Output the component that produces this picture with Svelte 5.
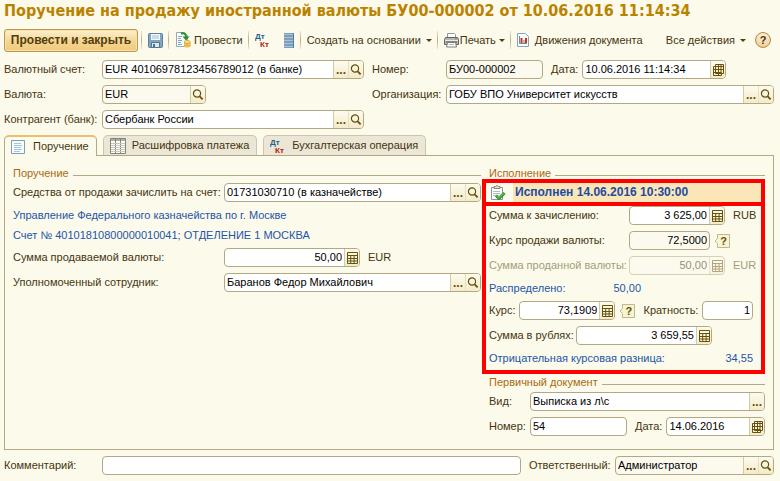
<script>
	const title = 'Поручение на продажу иностранной валюты БУ00-000002 от 10.06.2016 11:14:34';

	let activeTab = $state('order');

	const tabs = [
		{ id: 'order', label: 'Поручение', icon: 'sheet' },
		{ id: 'payment', label: 'Расшифровка платежа', icon: 'table' },
		{ id: 'entry', label: 'Бухгалтерская операция', icon: 'dtkt' }
	];

	const buttonLabels = {
		dots: 'Выбрать',
		search: 'Открыть',
		calc: 'Калькулятор',
		date: 'Календарь'
	};
</script>

{#snippet icon(name)}
	{#if name === 'search'}
		<svg width="12" height="12" viewBox="0 0 12 12" fill="none" stroke="#65500c">
			<circle cx="5" cy="4.5" r="3.6" stroke-width="1.2" />
			<path d="M7.4 7.2L10.6 10.4" stroke-width="1.8" />
		</svg>
	{:else if name === 'calc'}
		<svg width="11" height="12" viewBox="0 0 11 12">
			<path d="M.5.5h10v11H.5z" fill="#fbf5dc" stroke="#65500c" />
			<path d="M1 3h9v1H1zM1 6h9v1H1zM1 8.500h9v1H1zM3.200 3h1v8.500h-1zM6.600 3h1v8.500h-1z" fill="#65500c" />
		</svg>
	{:else if name === 'date'}
		<svg width="11" height="12" viewBox="0 0 11 12" fill="none" stroke="#65500c">
			<path d="M2.5.5h8v9h-8zM.5 2.500v9h8v-2M.5 2.500h10M.5 5.500h10M.5 8.500h8M5.500.5v11M8 .5v9" />
		</svg>
	{:else if name === 'save'}
		<svg width="15" height="15" viewBox="0 0 15 15">
			<path d="M.5 1.500q0-1 1-1h12q1 0 1 1v12q0 1-1 1h-12q-1 0-1-1z" fill="#7fa6c4" stroke="#5a7f9f" />
			<path d="M3 1h9v6H3z" fill="#f4f8fa" />
			<path d="M4 3h7M4 5h7" stroke="#a9bccb" />
			<path d="M3.500 9.500h8v5h-8z" fill="#dfe8ee" stroke="#56768f" />
			<path d="M5 11h2v3H5z" fill="#4c6f8b" />
		</svg>
	{:else if name === 'post'}
		<svg width="16" height="16" viewBox="0 0 16 16">
			<path d="M1.500.5h8l3 3v11h-11z" fill="#fafcfd" stroke="#93a9b5" />
			<path d="M3 4.500h4M3 6.500h3M3 8.500h4M3 10.500h3M3 12.500h4" stroke="#85a8bf" />
			<path d="M6 1.500c3-1 5 0 5 3.500" fill="none" stroke="#25902d" stroke-width="2" />
			<path d="M7.500 4.500h7L11 8.500z" fill="#25902d" />
			<path d="M9 10v4.500q3 2 6.500 0V10z" fill="#e2a52b" />
			<ellipse cx="12.200" cy="10" rx="3.200" ry="1.500" fill="#ffe08a" stroke="#cc8d1c" stroke-width=".6" />
			<path d="M9 12q3 1.800 6.500 0M9 13.800q3 1.800 6.500 0" fill="none" stroke="#fbd773" stroke-width=".8" />
		</svg>
	{:else if name === 'dtkt'}
		<svg class="dtkt" width="16" height="16" viewBox="0 0 16 16">
			<text x="0" y="7" fill="#245f8c">Дт</text>
			<text x="5" y="15" fill="#b5160c">Кт</text>
		</svg>
	{:else if name === 'register'}
		<svg width="12" height="15" viewBox="0 0 12 15">
			<path d="M1 0h10v15H1z" fill="#55799a" />
			<path d="M1 1.500h9M1 4.500h9M1 7.500h9M1 10.500h9M1 13.500h9" stroke="#a6c5dc" stroke-width="2" />
		</svg>
	{:else if name === 'print'}
		<svg width="15" height="15" viewBox="0 0 15 15">
			<path d="M3.500 5V.5h7l1 1V5" fill="#fff" stroke="#8b9aa3" />
			<path d="M1.500 4.500h12l1 2v5H.5v-5z" fill="#b7b7b2" stroke="#62625f" />
			<path d="M1 7.500h13" stroke="#ececea" />
			<path d="M2 9h11" stroke="#54544f" />
			<path d="M3.500 9.500h8l1 4.500h-10z" fill="#fff" stroke="#7f7f7a" />
			<path d="M5 11.500h5" stroke="#a4b9c6" />
			<path d="M11 6h2" stroke="#50a144" />
		</svg>
	{:else if name === 'chart'}
		<svg width="12" height="14" viewBox="0 0 12 14">
			<path d="M.5.5h8l3 3v10H.5z" fill="#fbfdfe" stroke="#87a3b8" />
			<path d="M2.500 3v7.500H10" fill="none" stroke="#6c8ca4" />
			<path d="M4.500 5v5" stroke="#cf3126" stroke-width="2" />
			<path d="M7 7v3" stroke="#3d9f3c" />
			<path d="M9 5v5" stroke="#cf3126" stroke-width="2" />
		</svg>
	{:else if name === 'sheet'}
		<svg width="14" height="14" viewBox="0 0 14 14">
			<path d="M.5.5h13v13H.5z" fill="#f8fcfd" stroke="#7f9fb1" />
			<path d="M3 3.500h7M3 5.500h8M3 7.500h7M3 9.500h8M3 11.500h6" stroke="#a2c6dc" />
		</svg>
	{:else if name === 'table'}
		<svg width="16" height="16" viewBox="0 0 16 16">
			<path d="M.5.5h15v15H.5z" fill="#fdfdfb" stroke="#85857c" />
			<path d="M1 1h14v2H1z" fill="#aeaea6" />
			<path d="M5.500 1v14M10.500 1v14" stroke="#85857c" />
			<path d="M1 5.500h14M1 7.500h14M1 9.500h14M1 11.500h14M1 13.500h14" stroke="#c8c8c0" />
		</svg>
	{:else if name === 'done'}
		<svg width="16" height="16" viewBox="0 0 16 16">
			<path d="M1.500 2.500h11v12h-11z" fill="#fdfefe" stroke="#8798a2" />
			<path d="M4 3.500V1.500h1.500q1.500-2 3 0H10v2z" fill="#e5e3d6" stroke="#8c8265" />
			<path d="M3 6.500h7M3 8.500h7M3 10.500h4" stroke="#a9bfcc" />
			<path d="M6 10.500l3 2.800L14.500 8" fill="none" stroke="#2b8a22" stroke-width="3" />
			<path d="M6.500 10.500l2.500 2.200L14 8" fill="none" stroke="#5cb948" stroke-width="1.600" />
		</svg>
	{/if}
{/snippet}

{#snippet field(id, value, buttons = [], kind = '')}
	<span class={'field ' + kind}>
		<input {id} {value} disabled={kind.includes('off')} readonly={kind.includes('locked')} />
		{#each buttons as name}
			<button
				class={'pick ' + name}
				type="button"
				aria-label={buttonLabels[name]}
				disabled={kind.includes('off')}
			>
				{#if name === 'dots'}...{:else}{@render icon(name)}{/if}
			</button>
		{/each}
	</span>
{/snippet}

{#snippet hint()}
	<button class="hint" type="button" aria-label="Подсказка">
		<svg width="16" height="14" viewBox="0 0 16 14" fill="#f8f3d3" stroke="#c1b88a">
			<path d="M3.500.5h12v13h-12V9.500L1 7l2.500-2.500z" />
		</svg>
		<b>?</b>
	</button>
{/snippet}

<main>
	<h1>{title}</h1>

	<div class="toolbar">
		<button class="primary" type="button">Провести и закрыть</button>
		<i class="sep"></i>
		<button class="tool" type="button" aria-label="Записать">{@render icon('save')}</button>
		<i class="sep"></i>
		<button class="tool" type="button">{@render icon('post')}Провести</button>
		<i class="sep"></i>
		<button class="tool" type="button" aria-label="Проводки">{@render icon('dtkt')}</button>
		<button class="tool gap" type="button" aria-label="Регистры">{@render icon('register')}</button>
		<i class="sep"></i>
		<button class="tool" type="button">Создать на основании<i class="arrow"></i></button>
		<i class="sep"></i>
		<button class="tool tight" type="button">{@render icon('print')}Печать<i class="arrow"></i></button>
		<i class="sep"></i>
		<button class="tool loose" type="button">{@render icon('chart')}Движения документа</button>
		<button class="tool all" type="button">Все действия<i class="arrow"></i></button>
		<button class="help" type="button" aria-label="Справка">?</button>
	</div>

	<div class="head">
		<label for="account">Валютный счет:</label>
		{@render field('account', 'EUR 40106978123456789012 (в банке)', ['dots', 'search'])}
		<label class="second" for="number">Номер:</label>
		<div class="row">
			{@render field('number', 'БУ00-000002', [], 'locked w-num')}
			<label for="date">Дата:</label>
			{@render field('date', '10.06.2016 11:14:34', ['date'], 'w-date')}
		</div>

		<label for="currency">Валюта:</label>
		{@render field('currency', 'EUR', ['search'], 'locked w-cur')}
		<label class="second" for="org">Организация:</label>
		{@render field('org', 'ГОБУ ВПО Университет искусств', ['dots', 'search'])}

		<label for="bank">Контрагент (банк):</label>
		{@render field('bank', 'Сбербанк России', ['dots', 'search'])}
	</div>

	<div class="tabs" role="tablist">
		{#each tabs as tab}
			<button
				class="tab"
				class:active={activeTab === tab.id}
				role="tab"
				type="button"
				aria-selected={activeTab === tab.id}
				onclick={() => (activeTab = tab.id)}
			>
				{@render icon(tab.icon)}{tab.label}
			</button>
		{/each}
	</div>

	<div class="panel">
		<section>
			<h2>Поручение</h2>
			<div class="order">
				<label for="credit">Средства от продажи зачислить на счет:</label>
				{@render field('credit', '01731030710 (в казначействе)', ['dots', 'search'])}
				<p class="info">Управление Федерального казначейства по г. Москве</p>
				<p class="info">Счет № 40101810800000010041; ОТДЕЛЕНИЕ 1 МОСКВА</p>
				<label for="sum">Сумма продаваемой валюты:</label>
				<div class="row">
					{@render field('sum', '50,00', ['calc'], 'num w-sum')}
					<span>EUR</span>
				</div>
				<label for="person">Уполномоченный сотрудник:</label>
				{@render field('person', 'Баранов Федор Михайлович', ['dots', 'search'])}
			</div>
		</section>

		<section class="done">
			<h2>Исполнение</h2>
			<div class="frame status">
				{@render icon('done')}
				<strong>Исполнен 14.06.2016 10:30:00</strong>
			</div>
			<div class="frame body">
				<div class="row">
					<label class="wide" for="credited">Сумма к зачислению:</label>
					{@render field('credited', '3 625,00', ['calc'], 'num w-calc')}
					<span>RUB</span>
				</div>
				<div class="row">
					<label class="wide" for="rate">Курс продажи валюты:</label>
					{@render field('rate', '72,5000', [], 'num locked w-rate')}
					{@render hint()}
				</div>
				<div class="row dim">
					<label class="wide" for="sold">Сумма проданной валюты:</label>
					{@render field('sold', '50,00', ['calc'], 'num off w-calc')}
					<span>EUR</span>
				</div>
				<p class="info total short"><span>Распределено:</span><span>50,00</span></p>
				<div class="row">
					<label for="rate2">Курс:</label>
					{@render field('rate2', '73,1909', ['calc'], 'num w-calc')}
					{@render hint()}
					<label for="mult">Кратность:</label>
					{@render field('mult', '1', [], 'num grow')}
				</div>
				<div class="row">
					<label class="mid" for="rub">Сумма в рублях:</label>
					{@render field('rub', '3 659,55', ['calc'], 'num w-sum')}
				</div>
				<p class="info total">
					<span>Отрицательная курсовая разница:</span><span>34,55</span>
				</p>
			</div>

			<h2>Первичный документ</h2>
			<div class="doc">
				<label for="kind">Вид:</label>
				{@render field('kind', 'Выписка из л\\с', ['dots'])}
				<label for="docnum">Номер:</label>
				<div class="row">
					{@render field('docnum', '54', [], 'w-num')}
					<label for="docdate">Дата:</label>
					{@render field('docdate', '14.06.2016', ['date'], 'grow')}
				</div>
			</div>
		</section>
	</div>

	<div class="foot">
		<label for="comment">Комментарий:</label>
		{@render field('comment', '')}
		<label class="second" for="resp">Ответственный:</label>
		{@render field('resp', 'Администратор', ['dots', 'search'], 'locked')}
	</div>
</main>

<style>
	:global(body) {
		margin: 0;
		background: #fcfaeb;
	}

	main {
		--line: #b3a884;
		padding: 0 6px 5px 4px;
		color: #45350f;
		font: 11px/19px 'Liberation Sans', Arial, sans-serif;
	}

	* {
		box-sizing: border-box;
	}

	svg {
		display: block;
		flex: none;
	}

	h1 {
		margin: 0;
		height: 28px;
		color: #b98300;
		font: bold 16px/22px 'DejaVu Sans Condensed', 'DejaVu Sans', Tahoma, sans-serif;
		white-space: nowrap;
	}

	h2 {
		display: flex;
		align-items: center;
		gap: 4px;
		margin: 0;
		color: #a86a10;
		font-size: 11px;
		font-weight: normal;
		line-height: 12px;
	}

	h2::after {
		content: '';
		flex: 1;
		height: 1px;
		margin-top: 4px;
		background: var(--line);
	}

	p {
		margin: 0;
	}

	label,
	span,
	button {
		white-space: nowrap;
	}

	button,
	input {
		font: inherit;
		color: inherit;
	}

	button {
		padding: 0;
		border: 0;
		background: none;
	}

	/* Toolbar */
	.toolbar {
		display: flex;
		align-items: center;
		height: 24px;
		margin-bottom: 8px;
	}

	.primary {
		flex: none;
		width: 134px;
		height: 23px;
		border: 1px solid #bd9650;
		border-radius: 3px;
		background: linear-gradient(#fdf0cf, #f5d590 55%, #f0ca7c);
		box-shadow: inset 0 0 0 1px #f8e0ab;
		color: #51400e;
		font-size: 12px;
		font-weight: bold;
	}

	.sep {
		flex: none;
		width: 1px;
		height: 18px;
		margin: 0 6px 0 3px;
		background: linear-gradient(#e9e3cb, #b9ae8c, #e9e3cb);
	}

	.tool {
		display: flex;
		align-items: center;
		gap: 3px;
		margin-right: 2px;
	}

	.tight {
		gap: 1px;
	}

	.loose {
		gap: 6px;
	}

	.gap {
		margin-left: 10px;
	}

	.arrow {
		margin-left: 2px;
		border: 3px solid transparent;
		border-top-color: #51400e;
		border-bottom: 0;
	}

	.all {
		margin-left: auto;
	}

	.help {
		width: 16px;
		height: 16px;
		margin: 0 3px 0 7px;
		border: 1px solid #b78b4a;
		border-radius: 50%;
		background: radial-gradient(circle at 50% 25%, #fff4df, #efc485);
		font-weight: bold;
		line-height: 14px;
	}

	.dtkt {
		font: bold 8px 'Liberation Sans', Arial, sans-serif;
	}

	/* Fields */
	.row {
		display: flex;
		align-items: center;
		gap: 4px;
	}

	.row .field + label,
	.row .field + span,
	.hint + label {
		margin-left: 4px;
	}

	.field {
		display: flex;
		min-width: 0;
		height: 19px;
		overflow: hidden;
		border: 1px solid var(--line);
		border-radius: 4px;
		background: #fff;
	}

	.field input {
		flex: 1;
		width: 0;
		min-width: 0;
		padding: 0 2px;
		border: 0;
		outline: 0;
		background: none;
		color: #000;
	}

	.field.locked {
		background: #fcfaee;
	}

	.num input {
		text-align: right;
	}

	.pick {
		display: grid;
		flex: none;
		place-items: center;
		width: 15px;
		border-left: 1px solid #e6dfc0;
		background: linear-gradient(#fdfbee, #f3ebc9);
		color: #65500c;
		line-height: 14px;
	}

	input + .pick {
		border-left-color: #d3caa6;
	}

	.dots {
		font-size: 12px;
		font-weight: bold;
	}

	.dim {
		color: #a59c7b;
	}

	.field.off {
		border-color: #d6cfb5;
		background: #fcfaee;
	}

	.off input {
		color: #96907a;
	}

	.off .pick {
		opacity: 0.5;
	}

	.w-cur {
		width: 104px;
	}

	.w-num {
		width: 97px;
	}

	.w-date {
		width: 144px;
	}

	.w-sum {
		width: 136px;
	}

	.w-calc {
		flex: none;
		width: 96px;
	}

	.w-rate {
		width: 81px;
	}

	.grow {
		flex: 1;
	}

	.hint {
		display: grid;
		color: #65500c;
		line-height: 14px;
	}

	.hint > * {
		grid-area: 1 / 1;
	}

	.hint b {
		padding-left: 3px;
	}

	/* Document header */
	.head {
		display: grid;
		grid-template-columns: 98px minmax(0, 262px) 82px minmax(0, 1fr);
		row-gap: 6px;
	}

	.second {
		padding-left: 8px;
	}

	/* Tabs */
	.tabs {
		display: flex;
		gap: 6px;
		height: 21px;
		margin-top: 6px;
	}

	.tab {
		display: flex;
		align-items: center;
		gap: 6px;
		height: 20px;
		padding: 0 7px 0 6px;
		border: 1px solid #cfc6aa;
		border-bottom: 0;
		border-radius: 5px 5px 0 0;
		background: #ebe6d6;
	}

	.tab.active {
		z-index: 1;
		gap: 8px;
		height: 21px;
		border-color: var(--line);
		border-top: 2px solid #eabf70;
		background: #fcfaeb;
	}

	.panel {
		display: grid;
		grid-template-columns: minmax(0, 1fr) 283px;
		gap: 1px;
		margin-top: -1px;
		padding: 11px 8px 13px;
		border: 1px solid var(--line);
	}

	.order {
		display: grid;
		grid-template-columns: 211px minmax(0, 1fr);
		row-gap: 6px;
		align-content: start;
		margin-top: 4px;
	}

	.order .info {
		grid-column: 1 / -1;
	}

	.info {
		color: #1d55a8;
		line-height: 14px;
	}

	.done h2 {
		padding-left: 7px;
	}

	.frame {
		border: 4px solid #fe0000;
	}

	.status {
		display: flex;
		align-items: center;
		gap: 7px;
		padding-left: 4px;
	}

	.status strong {
		flex: 1;
		padding-left: 2px;
		background: #fbe6b8;
		color: #1c4ba0;
		font-size: 12px;
	}

	.body {
		display: flex;
		flex-direction: column;
		gap: 6px;
		margin-bottom: 2px;
		padding: 0 8px 5px 3px;
		border-top: 0;
	}

	.wide {
		flex: none;
		width: 136px;
	}

	.mid {
		width: 83px;
	}

	.total {
		display: flex;
		justify-content: space-between;
	}

	.short {
		width: 152px;
	}

	.doc {
		display: grid;
		grid-template-columns: 41px minmax(0, 1fr);
		row-gap: 6px;
		margin-top: 4px;
		padding-left: 7px;
	}

	.foot {
		display: grid;
		grid-template-columns: 98px minmax(0, 1fr) 94px 159px;
		margin-top: 6px;
	}
</style>
